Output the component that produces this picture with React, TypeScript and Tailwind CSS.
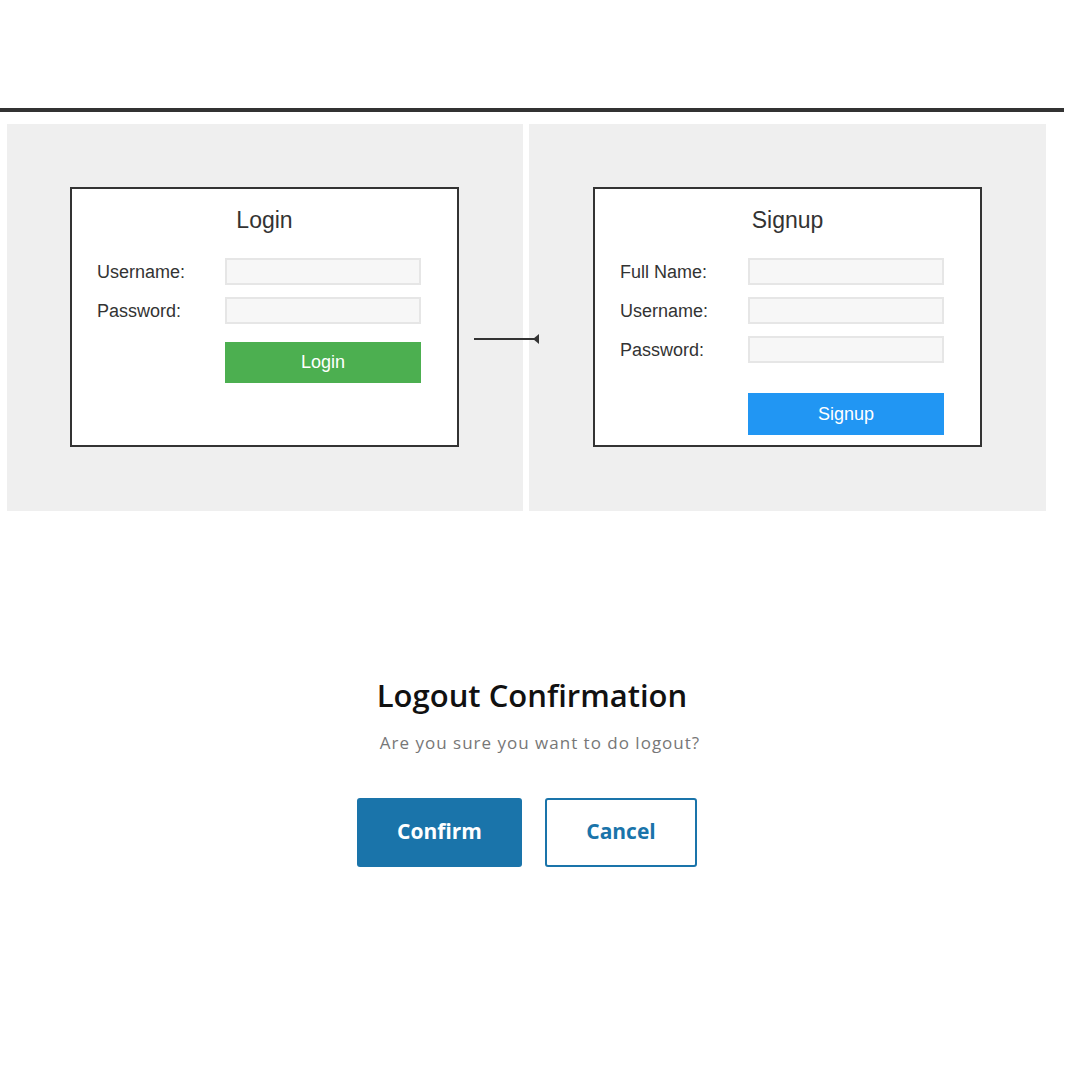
import React from "react";

const Field = ({ label }: { label: string }) => (
  <div className="flex items-center">
    <span className="w-[128px] text-[18px] leading-[22px] text-[#333]">{label}</span>
    <div className="h-[27px] w-[196px] border-2 border-[#e6e6e6] bg-[#f7f7f7]" />
  </div>
);

const App: React.FC = () => {
  return (
    <div className="relative h-[1080px] w-[1080px] bg-white font-['Liberation_Sans',Arial,sans-serif]">
      <div className="h-[108px]" />
      {/* top rule */}
      <div className="h-[4px] w-[1064px] bg-[#333]" />

      <div className="mt-[12px] flex gap-[6px] pl-[7px]">
        {/* LOGIN PANEL */}
        <div className="h-[387px] w-[516px] bg-[#efefef] pl-[63px] pt-[63px]">
          <div className="h-[260px] w-[389px] border-2 border-[#333] bg-white pl-[25px] pt-[16px]">
            <h1 className="mb-[23px] pr-[25px] text-center text-[23px] leading-[30px] text-[#333]">
              Login
            </h1>
            <div className="flex flex-col gap-[12px]">
              <Field label="Username:" />
              <Field label="Password:" />
            </div>
            <button className="ml-[128px] mt-[18px] h-[41px] w-[196px] bg-[#4caf50] text-[18px] text-white">
              Login
            </button>
          </div>
        </div>

        {/* SIGNUP PANEL */}
        <div className="h-[387px] w-[517px] bg-[#efefef] pl-[64px] pt-[63px]">
          <div className="h-[260px] w-[389px] border-2 border-[#333] bg-white pl-[25px] pt-[16px]">
            <h1 className="mb-[23px] pr-[25px] text-center text-[23px] leading-[30px] text-[#333]">
              Signup
            </h1>
            <div className="flex flex-col gap-[12px]">
              <Field label="Full Name:" />
              <Field label="Username:" />
              <Field label="Password:" />
            </div>
            <button className="ml-[128px] mt-[30px] h-[42px] w-[196px] bg-[#2196f3] text-[18px] text-white">
              Signup
            </button>
          </div>
        </div>
      </div>

      {/* connector between panels */}
      <svg
        className="absolute left-[472px] top-[332px]"
        width="70"
        height="14"
        viewBox="0 0 70 14"
      >
        <line x1="2" y1="7" x2="66" y2="7" stroke="#333" strokeWidth="2" />
        <polygon points="61,7 67,2 67,12" fill="#333" />
      </svg>

      {/* LOGOUT CONFIRMATION */}
      <div className="mt-[164px] flex flex-col items-center font-['Open_Sans',sans-serif]">
        <h2 className="pr-[16px] text-[31px] font-semibold leading-[40px] text-[#111]">
          Logout Confirmation
        </h2>
        <p className="mt-[15px] text-[17px] tracking-[1px] text-[#777]">
          Are you sure you want to do logout?
        </p>
        <div className="mt-[42px] flex gap-[23px] pr-[26px]">
          <button className="h-[69px] w-[165px] rounded-[3px] bg-[#1a74aa] text-[21px] font-bold text-white">
            Confirm
          </button>
          <button className="h-[69px] w-[152px] rounded-[3px] border-2 border-[#1a74aa] bg-white text-[21px] font-bold text-[#1a74aa]">
            Cancel
          </button>
        </div>
      </div>
    </div>
  );
};

export default App;
